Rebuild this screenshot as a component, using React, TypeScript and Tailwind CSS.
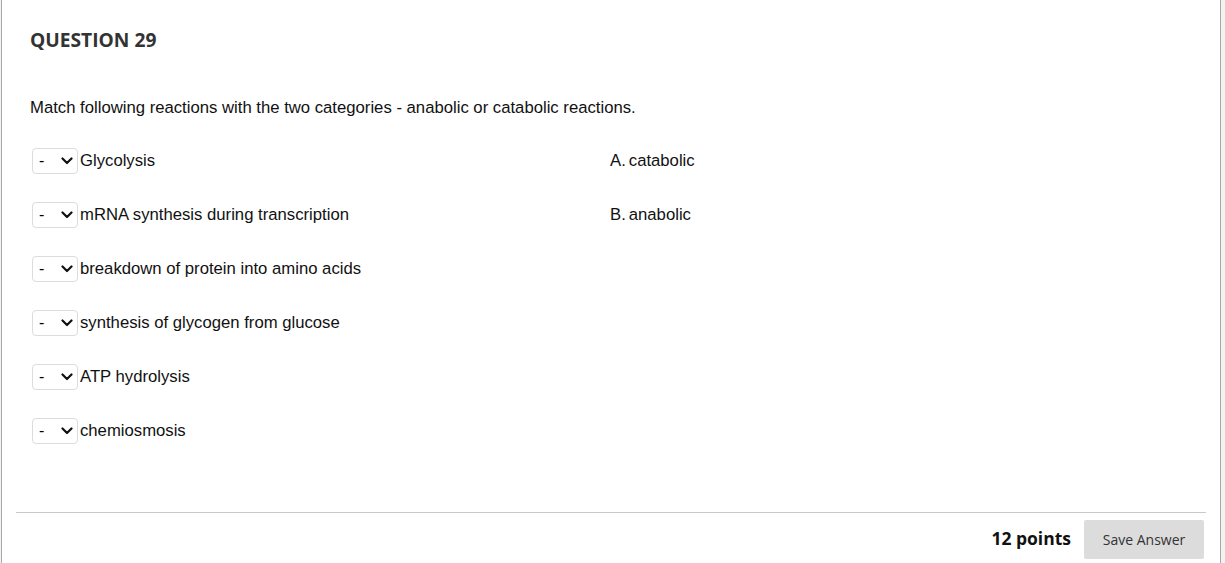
import React from "react";

const items = [
  "Glycolysis",
  "mRNA synthesis during transcription",
  "breakdown of protein into amino acids",
  "synthesis of glycogen from glucose",
  "ATP hydrolysis",
  "chemiosmosis",
];

const answers = [
  ["A.", "catabolic"],
  ["B.", "anabolic"],
];

function Sel() {
  return (
    <div className="flex h-[26px] w-[46px] shrink-0 items-center justify-between rounded-[4px] border border-[#dcdcdc] bg-white pl-[6px] pr-[3px]">
      <span className="text-[16px] leading-none text-black">-</span>
      <svg width="12" height="8" viewBox="0 0 12 8" className="mr-[1px]">
        <path d="M1.5 1.5 L6 6 L10.5 1.5" fill="none" stroke="#111" strokeWidth="2.2" strokeLinecap="round" strokeLinejoin="round" />
      </svg>
    </div>
  );
}

export default function App() {
  return (
    <div className="flex h-[563px] w-[1225px] bg-[#f2f2f2]" style={{ fontFamily: "'Liberation Sans', Arial, sans-serif" }}>
      <div className="ml-[1px] flex h-full w-[1220px] flex-col border-x border-[#a8a8a8] bg-white">
        <div className="flex-1 pl-[28px]">
          <h2 className="pt-[26px] text-[19.2px] font-bold leading-[28px] text-[#333]" style={{ fontFamily: "'Open Sans', sans-serif" }}>
            QUESTION 29
          </h2>
          <p className="mt-[44px] text-[16.7px] leading-[20px] text-[#111]">
            Match following reactions with the two categories - anabolic or catabolic reactions.
          </p>
          <div className="mt-[30px] flex pl-[2px]">
            <div className="flex w-[578px] flex-col gap-[28px]">
              {items.map((t) => (
                <div key={t} className="flex h-[26px] items-center gap-[2px]">
                  <Sel />
                  <span className="text-[16.7px] text-[#111]">{t}</span>
                </div>
              ))}
            </div>
            <div className="flex flex-col gap-[28px]">
              {answers.map(([l, t]) => (
                <div key={l} className="flex h-[26px] items-center gap-[3px] text-[16.7px] text-[#111]">
                  <span>{l}</span>
                  <span>{t}</span>
                </div>
              ))}
            </div>
          </div>
        </div>
        <div className="mx-[14px] mb-[4px] border-t border-[#c8c8c8] pt-[7px]">
          <div className="flex items-center justify-end gap-[13px] pr-[3px]">
            <span className="-mt-[3px] text-[17.5px] font-bold text-[#111]" style={{ fontFamily: "'Open Sans', sans-serif" }}>
              12 points
            </span>
            <div className="mr-[-1px] flex h-[39px] w-[120px] items-center justify-center rounded-[2px] bg-[#dcdcdc] pb-[1px] text-[14px] text-[#333]" style={{ fontFamily: "'Open Sans', sans-serif" }}>
              Save Answer
            </div>
          </div>
        </div>
      </div>
    </div>
  );
}
